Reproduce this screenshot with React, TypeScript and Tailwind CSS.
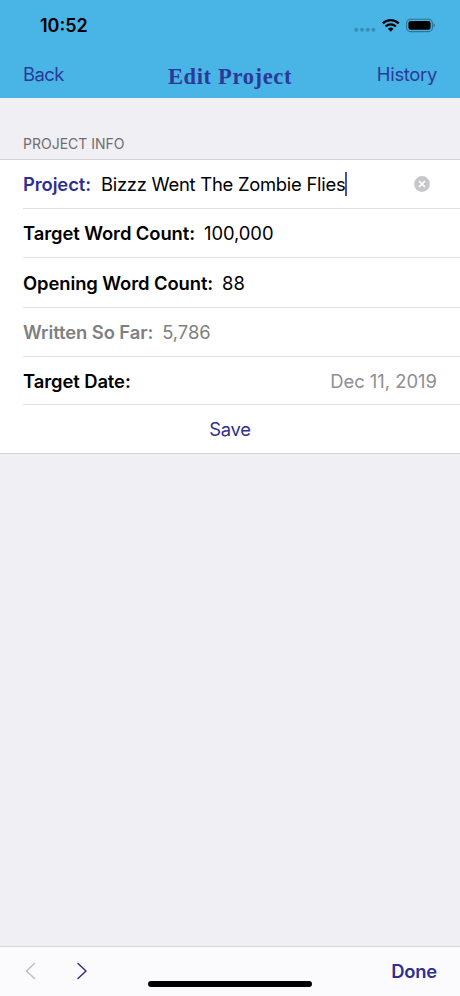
import type { ReactNode } from 'react'

type Row = { label: string; value: string; rowClass: string }

const ROWS: Row[] = [
  { label: 'Target Word Count:', value: '100,000', rowClass: 'h-[49px] text-black' },
  { label: 'Opening Word Count:', value: '88', rowClass: 'h-[50px] text-black' },
  { label: 'Written So Far:', value: '5,786', rowClass: 'h-[49px] text-[#808080]' },
]

function StatusIcons() {
  return (
    <svg className="mt-0.5" width="84" height="16" viewBox="0 0 84 16" aria-hidden="true">
      <g fill="#3590b6">
        <circle cx="3.3" cy="11.8" r="2" />
        <circle cx="9" cy="11.8" r="2" />
        <circle cx="14.8" cy="11.8" r="2" />
        <circle cx="20.4" cy="11.8" r="2" />
      </g>
      <g fill="none" stroke="#000" strokeWidth="2.3">
        <path d="M29.7 5.3a11.5 11.5 0 0 1 16 0" />
        <path d="M32.6 8.5a7.3 7.3 0 0 1 10.2 0" />
      </g>
      <path d="M37.7 13.7 34.9 10.8a4 4 0 0 1 5.6 0Z" fill="#000" />
      <rect x="53.6" y="1.2" width="25.8" height="12.4" rx="3.9" fill="none" stroke="#2d7391" strokeWidth="1.1" />
      <rect x="55.4" y="3" width="22.2" height="8.8" rx="2.2" fill="#000" />
      <path d="M80.5 5.3c2 .8 2 3.4 0 4.2Z" fill="#2d7391" />
    </svg>
  )
}

function Line({ children, className }: { children: ReactNode; className: string }) {
  return (
    <div className={`flex items-center border-b border-[#e2e2e4] pr-[23px] ${className}`}>
      {children}
    </div>
  )
}

export default function App() {
  return (
    <div className="flex h-[996px] w-[460px] flex-col overflow-hidden bg-[#efeff4] font-['Inter',sans-serif] text-[18.4px] leading-6 whitespace-pre">
      <header className="h-[98px] shrink-0 bg-[#49b4e6]">
        <div className="flex h-[50px] items-center justify-between pr-[23px] pl-10">
          <span className="pt-0.5 text-[18px] font-semibold text-black">10:52</span>
          <StatusIcons />
        </div>
        <div className="grid h-12 grid-cols-3 px-[23px] text-[#2b3a96]">
          <button className="h-12 pb-px text-left tracking-[-0.5px]">Back</button>
          <h1 className="flex h-12 items-center justify-center pt-1.5 font-['Liberation_Serif',serif] text-[22.5px] font-bold tracking-[0.65px]">
            Edit Project
          </h1>
          <button className="h-12 pb-px text-right tracking-[-0.3px]">History</button>
        </div>
      </header>

      <main className="flex-1">
        <h2 className="flex h-[61px] items-end pb-[3px] pl-[23px] text-[14px] text-[#6d6d72]">PROJECT INFO</h2>
        <section className="border-y border-[#d4d4d8] bg-white pl-[23px]">
          <Line className="h-[49px]">
            <span className="font-semibold tracking-[-0.1px] text-[#2f2f92]">Project:</span>
            <span className="ml-[10px] tracking-[-0.25px] text-black">Bizzz Went The Zombie Flies</span>
            <span className="h-6 w-0.5 bg-[#4650ae]" />
            <svg className="mr-[7px] ml-auto" width="16" height="16" viewBox="0 0 16 16" aria-hidden="true">
              <circle cx="8" cy="8" r="7.9" fill="#c7c7c9" />
              <path d="m5 5 6 6m0-6-6 6" stroke="#fff" strokeWidth="1.7" />
            </svg>
          </Line>
          {ROWS.map((row) => (
            <Line key={row.label} className={row.rowClass}>
              <span className="font-semibold tracking-[-0.08px]">{row.label}</span>
              <span className="ml-[9px] tracking-[-0.05px]">{row.value}</span>
            </Line>
          ))}
          <Line className="h-12 justify-between">
            <span className="font-semibold tracking-[-0.08px] text-black">Target Date:</span>
            <span className="text-[#8e8e93]">Dec 11, 2019</span>
          </Line>
          <button className="flex h-12 w-full items-center justify-center pr-[23px] tracking-[-0.3px] text-[#2f2f92]">
            Save
          </button>
        </section>
      </main>

      <footer className="relative flex h-[50px] shrink-0 items-center border-t border-[#d4d4da] bg-[#fbfbfd] px-[23px] pb-0.5">
        <svg width="70" height="20" viewBox="0 0 70 20" fill="none" strokeWidth="1.5" strokeLinecap="round" strokeLinejoin="round" aria-hidden="true">
          <path d="M11.5 2.5 3.5 10l8 7.5" stroke="#bdbdc1" />
          <path d="m55 2.5 8 7.5-8 7.5" stroke="#2f2f8c" />
        </svg>
        <button className="ml-auto font-semibold tracking-[-0.2px] text-[#2f2f8c]">Done</button>
        <div className="absolute bottom-[9px] left-[148px] h-[6px] w-[164px] rounded-full bg-black" />
      </footer>
    </div>
  )
}
